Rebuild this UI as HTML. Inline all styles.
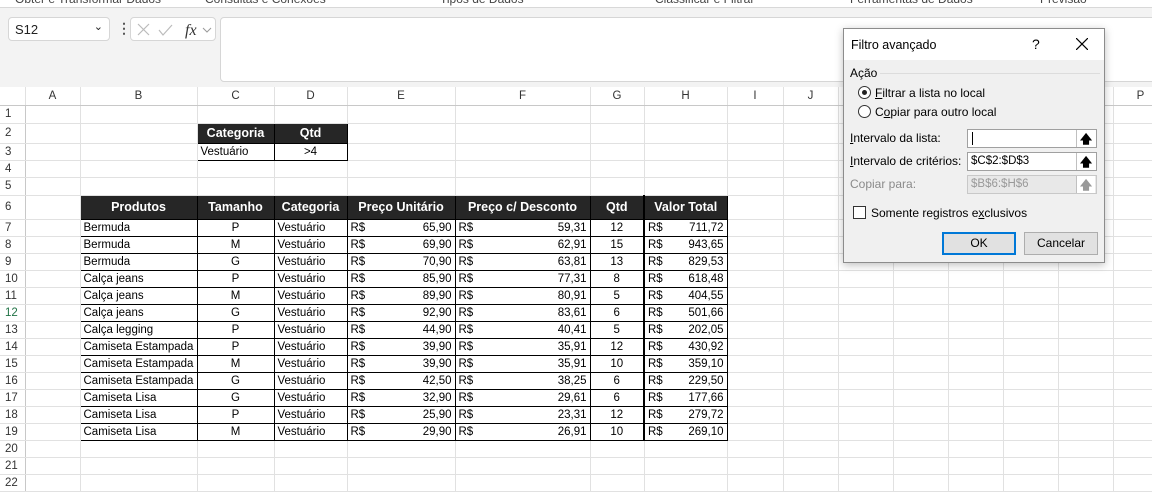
<!DOCTYPE html>
<html><head><meta charset="utf-8"><style>
*{box-sizing:border-box;margin:0;padding:0}
body{width:1152px;height:478px;overflow:hidden;background:#fff;font-family:"Liberation Sans",sans-serif;position:relative}
.top{position:absolute;left:0;top:0;width:1152px;height:8px;background:#fff;border-bottom:1px solid #d8d8d8;overflow:hidden}
.top span{position:absolute;top:-8px;font-size:12px;color:#444}
.fbar{position:absolute;left:0;top:8px;width:1152px;height:79px;background:#f3f3f3}
.nb{position:absolute;left:8px;top:9px;width:102px;height:24px;background:#fff;border:1px solid #d6d6d6;border-radius:4px;font-size:13px;padding:4px 6px;color:#222}
.fx{position:absolute;left:130px;top:9px;width:86px;height:24px;background:#fff;border:1px solid #d6d6d6;border-radius:4px}
.fin{position:absolute;left:220px;top:9px;width:940px;height:65px;background:#fff;border:1px solid #d6d6d6;border-radius:4px}
table.g{position:absolute;left:0;top:87px;border-collapse:collapse;table-layout:fixed;font-size:11.5px;width:1168px}
table.g td{border-right:1px solid #e1e1e1;border-bottom:1px solid #e1e1e1;height:17px;line-height:14px;padding:0 3px;white-space:nowrap;overflow:hidden;color:#000}
table.g tr{height:17px}
table.g tr.h td{background:#fff;text-align:center;color:#333;border-bottom:1px solid #c8c8c8;height:18px}
table.g td.rh{text-align:left;color:#333;padding-left:5px;border-right:1px solid #c8c8c8}
.k{background:#262626!important;color:#fff!important;font-weight:bold;text-align:center;font-size:12.5px;border:1px solid #000!important}
.b{border:1px solid #000!important}
.c{text-align:center}.r{text-align:right}
.hl{border-left:2px solid #000!important}
.dlg{position:absolute;left:843px;top:28px;width:262px;height:235px;background:#f0f0f0;border:1px solid #8c8c8c;box-shadow:0 2px 8px rgba(0,0,0,.25);font-size:12px;color:#000}
.dt{height:31px;background:#fff;padding:9px 7px;font-size:12.5px;position:relative}
.inp{position:absolute;left:123px;width:130px;height:19px;background:#fff;border:1px solid #a0a0a0;font-size:11.5px}
.btn{position:absolute;width:19px;height:17px;right:1px;top:0;background:#fff;border-left:1px solid #c0c0c0;text-align:center;font-size:12px;font-weight:bold}
.rad{position:absolute;width:13px;height:13px;border:1px solid #333;border-radius:50%;background:#fff}
u{text-decoration:underline}
</style></head><body>
<div class="top"><span style="left:15px">Obter e Transformar Dados</span><span style="left:205px">Consultas e Conexões</span><span style="left:440px">Tipos de Dados</span><span style="left:655px">Classificar e Filtrar</span><span style="left:850px">Ferramentas de Dados</span><span style="left:1040px">Previsão</span></div>
<div class="fbar">
<div class="nb">S12<span style="position:absolute;right:6px;top:2px;font-size:11px">&#8964;</span></div>
<div style="position:absolute;left:117px;top:12px;font-size:14px;font-weight:bold;color:#555">&#8942;</div>
<div class="fx"><svg width="86" height="24"><path d="M7 6l11 11M18 6L7 17" stroke="#bbb" stroke-width="1.2" fill="none"/><path d="M28 12l4 5 9-10" stroke="#bbb" stroke-width="1.2" fill="none"/><text x="54" y="17" font-family="Liberation Serif" font-style="italic" font-size="16" fill="#333">fx</text><path d="M72 10l4 4 4-4" stroke="#999" fill="none"/></svg></div>
<div class="fin"></div>
</div>
<table class="g">
<colgroup><col style="width:25px"><col style="width:55px"><col style="width:117px"><col style="width:77px"><col style="width:73px"><col style="width:108px"><col style="width:135px"><col style="width:54px"><col style="width:83px"><col style="width:56px"><col style="width:55px"><col style="width:55px"><col style="width:55px"><col style="width:55px"><col style="width:55px"><col style="width:55px"><col style="width:55px"></colgroup>
<tr class="h"><td></td><td>A</td><td>B</td><td>C</td><td>D</td><td>E</td><td>F</td><td>G</td><td>H</td><td>I</td><td>J</td><td>K</td><td>L</td><td>M</td><td>N</td><td>O</td><td>P</td></tr>
<tr style="height:18px"><td class="rh" style="height:18px">1</td><td></td><td></td><td></td><td></td><td></td><td></td><td></td><td></td><td></td><td></td><td></td><td></td><td></td><td></td><td></td><td></td></tr>
<tr style="height:20px"><td class="rh" style="height:20px">2</td><td></td><td></td><td class="k">Categoria</td><td class="k">Qtd</td><td></td><td></td><td></td><td></td><td></td><td></td><td></td><td></td><td></td><td></td><td></td><td></td></tr>
<tr><td class="rh">3</td><td></td><td></td><td class="b">Vestuário</td><td class="b c">&gt;4</td><td></td><td></td><td></td><td></td><td></td><td></td><td></td><td></td><td></td><td></td><td></td><td></td></tr>
<tr><td class="rh">4</td><td></td><td></td><td></td><td></td><td></td><td></td><td></td><td></td><td></td><td></td><td></td><td></td><td></td><td></td><td></td><td></td></tr>
<tr style="height:18px"><td class="rh" style="height:18px">5</td><td></td><td></td><td></td><td></td><td></td><td></td><td></td><td></td><td></td><td></td><td></td><td></td><td></td><td></td><td></td><td></td></tr>
<tr style="height:24px"><td class="rh" style="height:24px">6</td><td></td><td class="k">Produtos</td><td class="k">Tamanho</td><td class="k">Categoria</td><td class="k">Preço Unitário</td><td class="k">Preço c/ Desconto</td><td class="k">Qtd</td><td class="k hl">Valor Total</td><td></td><td></td><td></td><td></td><td></td><td></td><td></td><td></td></tr>
<tr><td class="rh">7</td><td></td><td class="b">Bermuda</td><td class="b c">P</td><td class="b">Vestuário</td><td class="b">R$<span style="float:right">65,90</span></td><td class="b">R$<span style="float:right">59,31</span></td><td class="b c">12</td><td class="b hl">R$<span style="float:right">711,72</span></td><td></td><td></td><td></td><td></td><td></td><td></td><td></td><td></td></tr>
<tr><td class="rh">8</td><td></td><td class="b">Bermuda</td><td class="b c">M</td><td class="b">Vestuário</td><td class="b">R$<span style="float:right">69,90</span></td><td class="b">R$<span style="float:right">62,91</span></td><td class="b c">15</td><td class="b hl">R$<span style="float:right">943,65</span></td><td></td><td></td><td></td><td></td><td></td><td></td><td></td><td></td></tr>
<tr><td class="rh">9</td><td></td><td class="b">Bermuda</td><td class="b c">G</td><td class="b">Vestuário</td><td class="b">R$<span style="float:right">70,90</span></td><td class="b">R$<span style="float:right">63,81</span></td><td class="b c">13</td><td class="b hl">R$<span style="float:right">829,53</span></td><td></td><td></td><td></td><td></td><td></td><td></td><td></td><td></td></tr>
<tr><td class="rh">10</td><td></td><td class="b">Calça jeans</td><td class="b c">P</td><td class="b">Vestuário</td><td class="b">R$<span style="float:right">85,90</span></td><td class="b">R$<span style="float:right">77,31</span></td><td class="b c">8</td><td class="b hl">R$<span style="float:right">618,48</span></td><td></td><td></td><td></td><td></td><td></td><td></td><td></td><td></td></tr>
<tr><td class="rh">11</td><td></td><td class="b">Calça jeans</td><td class="b c">M</td><td class="b">Vestuário</td><td class="b">R$<span style="float:right">89,90</span></td><td class="b">R$<span style="float:right">80,91</span></td><td class="b c">5</td><td class="b hl">R$<span style="float:right">404,55</span></td><td></td><td></td><td></td><td></td><td></td><td></td><td></td><td></td></tr>
<tr><td class="rh" style="color:#217346">12</td><td></td><td class="b">Calça jeans</td><td class="b c">G</td><td class="b">Vestuário</td><td class="b">R$<span style="float:right">92,90</span></td><td class="b">R$<span style="float:right">83,61</span></td><td class="b c">6</td><td class="b hl">R$<span style="float:right">501,66</span></td><td></td><td></td><td></td><td></td><td></td><td></td><td></td><td></td></tr>
<tr><td class="rh">13</td><td></td><td class="b">Calça legging</td><td class="b c">P</td><td class="b">Vestuário</td><td class="b">R$<span style="float:right">44,90</span></td><td class="b">R$<span style="float:right">40,41</span></td><td class="b c">5</td><td class="b hl">R$<span style="float:right">202,05</span></td><td></td><td></td><td></td><td></td><td></td><td></td><td></td><td></td></tr>
<tr><td class="rh">14</td><td></td><td class="b">Camiseta Estampada</td><td class="b c">P</td><td class="b">Vestuário</td><td class="b">R$<span style="float:right">39,90</span></td><td class="b">R$<span style="float:right">35,91</span></td><td class="b c">12</td><td class="b hl">R$<span style="float:right">430,92</span></td><td></td><td></td><td></td><td></td><td></td><td></td><td></td><td></td></tr>
<tr><td class="rh">15</td><td></td><td class="b">Camiseta Estampada</td><td class="b c">M</td><td class="b">Vestuário</td><td class="b">R$<span style="float:right">39,90</span></td><td class="b">R$<span style="float:right">35,91</span></td><td class="b c">10</td><td class="b hl">R$<span style="float:right">359,10</span></td><td></td><td></td><td></td><td></td><td></td><td></td><td></td><td></td></tr>
<tr><td class="rh">16</td><td></td><td class="b">Camiseta Estampada</td><td class="b c">G</td><td class="b">Vestuário</td><td class="b">R$<span style="float:right">42,50</span></td><td class="b">R$<span style="float:right">38,25</span></td><td class="b c">6</td><td class="b hl">R$<span style="float:right">229,50</span></td><td></td><td></td><td></td><td></td><td></td><td></td><td></td><td></td></tr>
<tr><td class="rh">17</td><td></td><td class="b">Camiseta Lisa</td><td class="b c">G</td><td class="b">Vestuário</td><td class="b">R$<span style="float:right">32,90</span></td><td class="b">R$<span style="float:right">29,61</span></td><td class="b c">6</td><td class="b hl">R$<span style="float:right">177,66</span></td><td></td><td></td><td></td><td></td><td></td><td></td><td></td><td></td></tr>
<tr><td class="rh">18</td><td></td><td class="b">Camiseta Lisa</td><td class="b c">P</td><td class="b">Vestuário</td><td class="b">R$<span style="float:right">25,90</span></td><td class="b">R$<span style="float:right">23,31</span></td><td class="b c">12</td><td class="b hl">R$<span style="float:right">279,72</span></td><td></td><td></td><td></td><td></td><td></td><td></td><td></td><td></td></tr>
<tr><td class="rh">19</td><td></td><td class="b">Camiseta Lisa</td><td class="b c">M</td><td class="b">Vestuário</td><td class="b">R$<span style="float:right">29,90</span></td><td class="b">R$<span style="float:right">26,91</span></td><td class="b c">10</td><td class="b hl">R$<span style="float:right">269,10</span></td><td></td><td></td><td></td><td></td><td></td><td></td><td></td><td></td></tr>
<tr><td class="rh">20</td><td></td><td></td><td></td><td></td><td></td><td></td><td></td><td></td><td></td><td></td><td></td><td></td><td></td><td></td><td></td><td></td></tr>
<tr><td class="rh">21</td><td></td><td></td><td></td><td></td><td></td><td></td><td></td><td></td><td></td><td></td><td></td><td></td><td></td><td></td><td></td><td></td></tr>
<tr><td class="rh">22</td><td></td><td></td><td></td><td></td><td></td><td></td><td></td><td></td><td></td><td></td><td></td><td></td><td></td><td></td><td></td><td></td></tr>
</table>
<div class="dlg">
<div class="dt">Filtro avançado<span style="position:absolute;left:188px;top:7px;font-size:14px">?</span><svg style="position:absolute;left:232px;top:9px" width="12" height="12"><path d="M0 0L12 12M12 0L0 12" stroke="#000" stroke-width="1.2"/></svg></div>
<div style="position:absolute;left:6px;top:37px">Ação</div>
<div style="position:absolute;left:36px;top:44px;width:220px;height:1px;background:#dcdcdc"></div>
<div class="rad" style="left:14px;top:57px"><div style="position:absolute;left:3px;top:3px;width:5px;height:5px;border-radius:50%;background:#222"></div></div>
<div style="position:absolute;left:31px;top:57px"><u>F</u>iltrar a lista no local</div>
<div class="rad" style="left:14px;top:76px"></div>
<div style="position:absolute;left:31px;top:76px">C<u>o</u>piar para outro local</div>
<div style="position:absolute;left:6px;top:102px"><u>I</u>ntervalo da lista:</div>
<div class="inp" style="top:100px"><span style="position:absolute;left:4px;top:2px;width:1px;height:13px;background:#000"></span><div class="btn">&#129093;</div></div>
<div style="position:absolute;left:6px;top:125px"><u>I</u>ntervalo de critérios:</div>
<div class="inp" style="top:123px;padding:2px 3px">$C$2:$D$3<div class="btn">&#129093;</div></div>
<div style="position:absolute;left:6px;top:148px;color:#8a8a8a">Copiar para:</div>
<div class="inp" style="top:146px;padding:2px 3px;background:#e8e8e8;color:#999;border-color:#c8c8c8">$B$6:$H$6<div class="btn">&#129093;</div></div>
<div style="position:absolute;left:9px;top:177px;width:13px;height:13px;border:1px solid #333;background:#fff"></div>
<div style="position:absolute;left:27px;top:177px">Somente registros e<u>x</u>clusivos</div>
<div style="position:absolute;left:98px;top:203px;width:74px;height:23px;border:2px solid #0078d7;background:#e1e1e1;text-align:center;line-height:19px">OK</div>
<div style="position:absolute;left:180px;top:203px;width:74px;height:23px;border:1px solid #adadad;background:#e1e1e1;text-align:center;line-height:21px">Cancelar</div>
</div>
</body></html>
